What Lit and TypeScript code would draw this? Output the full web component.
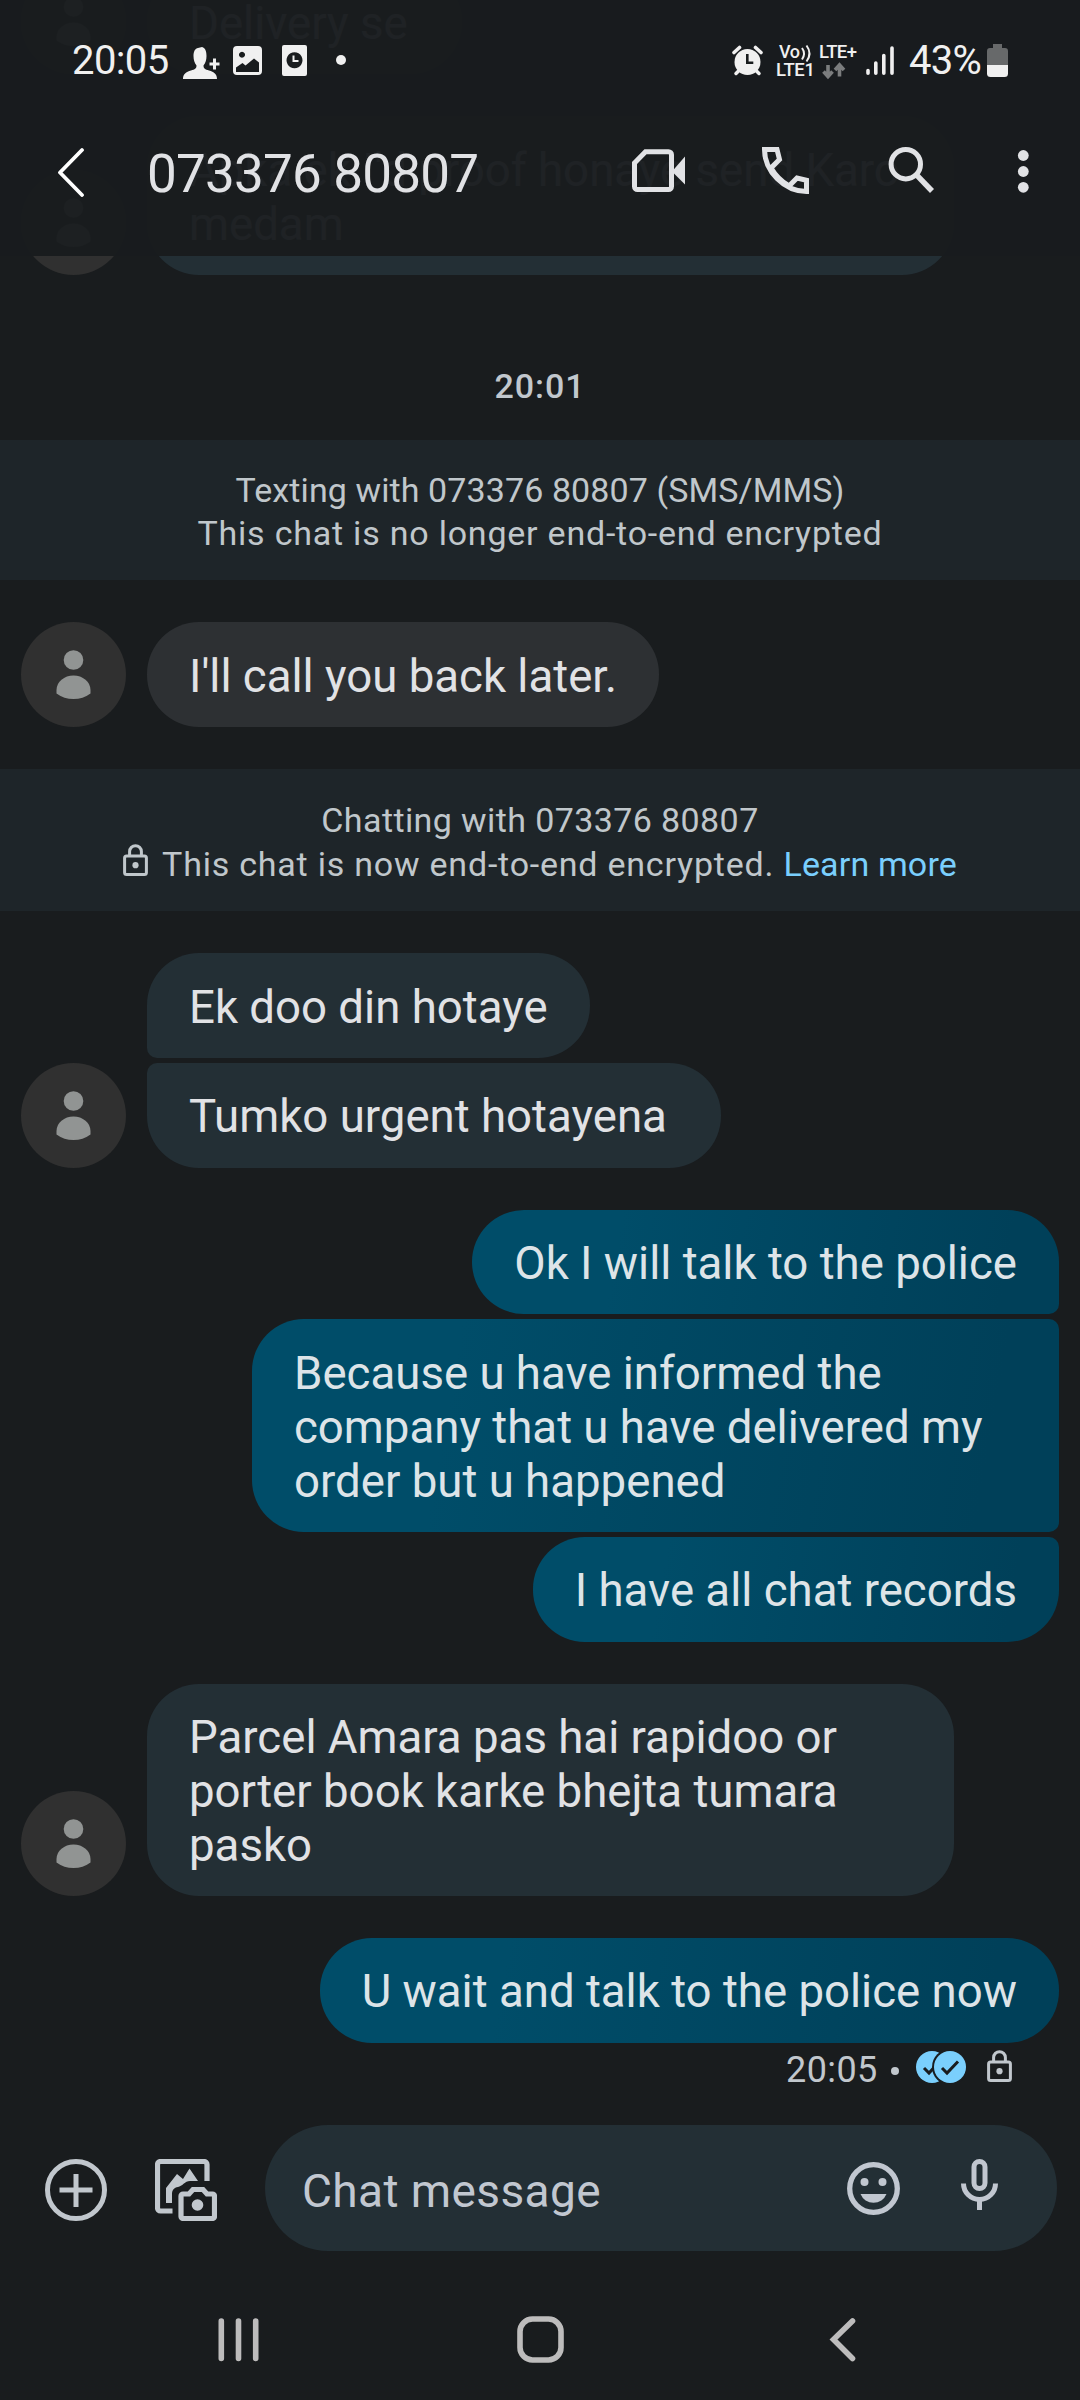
import { LitElement, html, css, nothing } from "lit";
import { customElement, property } from "lit/decorators.js";
import { classMap } from "lit/directives/class-map.js";

interface Bubble {
  lines: string[];
  flatTop?: boolean;
  flatBottom?: boolean;
  grey?: boolean;
  roomy?: boolean;
}

const lockIcon = html`<svg class="lock" viewBox="0 0 25 32">
  <rect x="1.6" y="12" width="21.8" height="18.4" rx="2" fill="none" stroke="currentColor" stroke-width="3"/>
  <path d="M6.6 12V7.6a5.9 5.9 0 0 1 11.8 0V12" fill="none" stroke="currentColor" stroke-width="3"/>
  <circle cx="12.5" cy="21.2" r="3.1" fill="currentColor"/>
</svg>`;

@customElement("chat-avatar")
export class ChatAvatar extends LitElement {
  static styles = css`
    :host { display: block; width: 105px; height: 105px; flex: none; }
    .pic { display: block; width: 105px; height: 105px; }
  `;
  render() {
    return html`<svg class="pic" viewBox="0 0 105 105">
      <circle cx="52.5" cy="52.5" r="52.5" fill="#303030"/>
      <circle cx="52.5" cy="38" r="9.8" fill="#919493"/>
      <path d="M35.5 71.5V68a17 14.5 0 0 1 34 0v3.500Q62 77 52.500 77T35.500 71.500Z" fill="#919493"/>
    </svg>`;
  }
}

@customElement("chat-group")
export class ChatGroup extends LitElement {
  @property({ attribute: false }) bubbles: Bubble[] = [];
  @property({ type: Boolean }) mine = false;
  static styles = css`
    :host { display: block; }
    .group { display: flex; align-items: flex-end; gap: 21px; padding: 0 21px; }
    .mine { justify-content: flex-end; }
    .stack { display: flex; flex-direction: column; gap: 5px; align-items: flex-start; }
    .mine .stack { align-items: flex-end; }
    .bubble {
      box-sizing: border-box; padding: 27.6px 42px 23.4px; border-radius: 52px; background: #232f35; color: #e1e2e5;
      font-size: 45.6px; line-height: 53.8px; white-space: nowrap;
    }
    .wide { width: 807px; }
    .roomy { padding-right: 54px; }
    .grey { background: #2d3033; }
    .flat-top { border-top-left-radius: 10px; }
    .flat-bottom { border-bottom-left-radius: 10px; }
    .mine .bubble { background: linear-gradient(100deg, #004d69 25%, #004059 90%); color: #dde4e8; }
    .mine .flat-top { border-top-left-radius: 52px; border-top-right-radius: 10px; }
    .mine .flat-bottom { border-bottom-left-radius: 52px; border-bottom-right-radius: 10px; }
    .line { display: block; }
  `;
  render() {
    return html`<div class=${classMap({ group: true, mine: this.mine })}>
      ${this.mine ? nothing : html`<chat-avatar></chat-avatar>`}
      <div class="stack">
        ${this.bubbles.map(
          (b) => html`<div class=${classMap({
            bubble: true, wide: b.lines.length > 1, roomy: !!b.roomy, grey: !!b.grey,
            "flat-top": !!b.flatTop, "flat-bottom": !!b.flatBottom,
          })}>${b.lines.map((l) => html`<span class="line">${l}</span>`)}</div>`
        )}
      </div>
    </div>`;
  }
}

@customElement("status-bar")
export class StatusBar extends LitElement {
  static styles = css`
    :host { display: block; }
    .bar { display: flex; align-items: center; height: 120px; padding: 0 72px 0 72px; color: #f0f0f0; }
    .time { font-size: 40px; line-height: 40px; width: 111px; letter-spacing: -0.6px; padding-top: 1px; }
    .icons { display: block; width: 165px; height: 40px; }
    .spacer { flex: 1; }
    .right { display: block; width: 164px; height: 40px; margin-right: 13px; }
    .tiny { font-family: Roboto, sans-serif; font-weight: 500; }
    .percent { font-size: 40px; line-height: 40px; letter-spacing: -0.7px; width: 78px; padding-top: 1px; }
    .battery { display: block; width: 21px; height: 40px; }
  `;
  render() {
    return html`<div class="bar">
      <span class="time">20:05</span>
      <svg class="icons" viewBox="183 40 165 40" fill="#f0f0f0">
        <path d="M183 79c0-5 3-7 8-8.500 4-1.200 5.500-2 5.500-5-2-2.500-3-5.500-3-9.500 0-5 1.800-7.500 4.500-8l4-1c3.500 1 4.500 4.500 4.500 9 0 4-1 7-3 9.500 0 3 1.500 3.800 5.500 5 5 1.500 8 3.500 8 8.500Z"/>
        <path d="M209.500 62.500h3.500V58.500h3v4h3.500v3h-3.500v4h-3v-4h-3.500Z"/>
        <path fill-rule="evenodd" d="M237 46h21a4 4 0 0 1 4 4v21a4 4 0 0 1-4 4H237a4 4 0 0 1-4-4V50a4 4 0 0 1 4-4ZM236 67.500V72h23V62.500L254 58.500 245.500 65.500 242.500 63ZM242 51.800a3 3 0 1 0 .01 0Z"/>
        <path fill-rule="evenodd" d="M284 45h21a2 2 0 0 1 2 2V74a2 2 0 0 1-2 2H284a2 2 0 0 1-2-2V47a2 2 0 0 1 2-2ZM294.500 52.300a8 8 0 1 0 .01 0Z"/>
        <path d="M293.500 55.500v5.500h5" fill="none" stroke="#f0f0f0" stroke-width="2"/>
        <circle cx="341" cy="60" r="5"/>
      </svg>
      <span class="spacer"></span>
      <svg class="right" viewBox="732 40 164 40" fill="#f0f0f0">
        <circle cx="747.500" cy="62" r="13"/>
        <path d="M734 52.500l5.500-5M761 52.500l-5.500-5" stroke="#f0f0f0" stroke-width="3.600" stroke-linecap="round"/>
        <path d="M738.500 71l-2.500 2.500M756.500 71l2.500 2.500" stroke="#f0f0f0" stroke-width="3.500" stroke-linecap="round"/>
        <path d="M747.300 54v8.800h6" fill="none" stroke="#191c1e" stroke-width="2.600"/>
        <text class="tiny" x="779" y="58" font-size="18" textLength="21">Vo</text>
        <path d="M802 48q4 5.500 0 11.500M806.500 45.500q6 8 0 16" fill="none" stroke="#f0f0f0" stroke-width="2"/>
        <text class="tiny" x="776" y="76" font-size="18.500" textLength="39">LTE1</text>
        <text class="tiny" x="819" y="58" font-size="18.500" textLength="38">LTE+</text>
        <path d="M828 65v11M823.500 71.500l4.500 5 4.500-5M839.500 76.500v-11M835 70l4.500-5 4.500 5" fill="none" stroke="#7b7d7e" stroke-width="3.600"/>
        <path d="M868 70.500v2.700M875.800 63v10.200M883.800 55.500v17.700M892 48v25.200" stroke="#f0f0f0" stroke-width="3.600" stroke-linecap="round"/>
      </svg>
      <span class="percent">43%</span>
      <svg class="battery" viewBox="987 40 21 40">
        <path d="M993 44h9v4h3a3 3 0 0 1 3 3v14h-21V51a3 3 0 0 1 3-3h3Z" fill="#67696a"/>
        <path d="M987 65h21v8.500a3.500 3.500 0 0 1-3.500 3.500h-14a3.500 3.500 0 0 1-3.500-3.500Z" fill="#f0f0f0"/>
      </svg>
    </div>`;
  }
}

@customElement("app-root")
export class AppRoot extends LitElement {
  static styles = css`
    :host {
      display: block; width: 1080px; height: 2400px; background: #191c1e;
      font-family: Roboto, "Liberation Sans", sans-serif; color: #e1e2e5;
    }
    .screen { position: relative; display: flex; flex-direction: column; height: 2400px; overflow: hidden; }
    .top { position: absolute; top: 0; left: 0; width: 1080px; height: 256px; background: rgba(25, 28, 30, 0.97); }
    .toolbar { display: flex; align-items: center; height: 104px; padding: 0 49px 0 57px; }
    .back { display: block; width: 28px; height: 50px; }
    .title { font-size: 53px; line-height: 60px; margin-left: 62px; width: 484px; letter-spacing: -0.8px; white-space: nowrap; padding-top: 3px; }
    .actions { display: block; width: 400px; height: 60px; }
    .thread { height: 2107px; overflow: hidden; display: flex; flex-direction: column; gap: 42px; }
    .earlier { height: 275px; display: flex; flex-direction: column; justify-content: flex-end; gap: 42px; }
    .time { text-align: center; font-size: 34px; line-height: 39px; font-weight: 500; color: #c1c7cd; margin: 50px 0 -8px; height: 39px; letter-spacing: 0.9px; }
    .banner { background: #1e2529; color: #c0c7cb; text-align: center; font-size: 34px; line-height: 43px; padding: 29px 0 25px; height: 86px; white-space: nowrap; }
    .banner.secure { line-height: 44px; padding: 29px 0 25px; height: 88px; }
    .row { display: block; letter-spacing: 0.1px; }
    .secure .row { letter-spacing: 0.4px; }
    .row.note { letter-spacing: 0.78px; }
    .learn { color: #7acffd; letter-spacing: 0.15px; }
    .lock { display: inline-block; width: 25px; height: 32px; }
    .banner .lock { margin-right: 14px; }
    .meta { display: flex; align-items: center; justify-content: flex-end; padding-right: 68px; margin-top: -35px; height: 40px; color: #c1c7cd; font-size: 36px; letter-spacing: 0.4px; }
    .sent { width: 105px; white-space: nowrap; }
    .bullet { width: 8px; height: 8px; border-radius: 4px; background: #c1c7cd; margin-right: 17px; margin-top: 2px; }
    .ticks { display: block; width: 50px; height: 32px; margin: -6px 21px 0 0; }
    .meta .lock { margin-top: -7px; }
    .composer { display: flex; align-items: center; height: 126px; padding: 0 23px 0 45px; margin-top: 18px; color: #c1c7cd; }
    .tool { display: block; width: 62px; height: 62px; margin: 3px 48px 0 0; }
    .field { display: flex; align-items: center; width: 792px; height: 126px; border-radius: 63px; background: #232f35; box-sizing: border-box; padding: 0 59px 0 37px; }
    .hint { flex: 1; font-size: 46px; color: #c1c7d0; padding-top: 5px; letter-spacing: 0.4px; }
    .emoji { display: block; width: 53px; height: 53px; margin-right: 61px; }
    .mic { display: block; width: 37px; height: 52px; margin-top: -6px; }
    .nav { display: block; width: 1080px; height: 149px; }
  `;

  render() {
    return html`<div class="screen">
      <div class="thread">
        <div class="earlier">
          <chat-group .bubbles=${[{ lines: ["Delivery se"], roomy: true }]}></chat-group>
          <chat-group .bubbles=${[{ lines: ["Apka ek I'd proof honaye send Karo", "medam"] }]}></chat-group>
        </div>
        <div class="time">20:01</div>
        <div class="banner">
          <span class="row">Texting with 073376 80807 (SMS/MMS)</span>
          <span class="row note">This chat is no longer end-to-end encrypted</span>
        </div>
        <chat-group .bubbles=${[{ lines: ["I'll call you back later."], grey: true }]}></chat-group>
        <div class="banner secure">
          <span class="row">Chatting with 073376 80807</span>
          <span class="row note">${lockIcon}This chat is now end-to-end encrypted. <span class="learn">Learn more</span></span>
        </div>
        <chat-group .bubbles=${[
          { lines: ["Ek doo din hotaye"], flatBottom: true },
          { lines: ["Tumko urgent hotayena"], flatTop: true, roomy: true },
        ]}></chat-group>
        <chat-group mine .bubbles=${[
          { lines: ["Ok I will talk to the police"], flatBottom: true },
          { lines: ["Because u have informed the", "company that u have delivered my", "order but u happened"], flatTop: true, flatBottom: true },
          { lines: ["I have all chat records"], flatTop: true },
        ]}></chat-group>
        <chat-group .bubbles=${[
          { lines: ["Parcel Amara pas hai rapidoo or", "porter book karke bhejta tumara", "pasko"] },
        ]}></chat-group>
        <chat-group mine .bubbles=${[{ lines: ["U wait and talk to the police now"] }]}></chat-group>
        <div class="meta">
          <span class="sent">20:05</span>
          <span class="bullet"></span>
          <svg class="ticks" viewBox="0 0 50 32">
            <circle cx="16" cy="16" r="16" fill="#7acffd"/>
            <path d="M8 17l5 5 11-12" fill="none" stroke="#191c1e" stroke-width="3"/>
            <circle cx="34" cy="16" r="18" fill="#191c1e"/>
            <circle cx="34" cy="16" r="16" fill="#7acffd"/>
            <path d="M26 17l5 5 11-11.500" fill="none" stroke="#191c1e" stroke-width="3"/>
          </svg>
          ${lockIcon}
        </div>
      </div>

      <div class="composer">
        <svg class="tool" viewBox="0 0 62 62" fill="none" stroke="currentColor" stroke-width="5">
          <circle cx="31" cy="31" r="28.500"/>
          <path d="M31 15v33M14.500 31h33"/>
        </svg>
        <svg class="tool" viewBox="0 0 62 62" fill="none" stroke="currentColor" stroke-width="5.200">
          <path d="M17.500 52H5.500a3 3 0 0 1-3-3V5.500a3 3 0 0 1 3-3H49a3 3 0 0 1 3 3V22"/>
          <path d="M11 44V29L22 15l6 5 6.500-10.500L43 22H35c-5 0-8 5.500-12 6-4 .5-6 3.500-6 6.500V44Z" fill="currentColor" stroke="none"/>
          <path d="M28 35h6l4-4.500h10l4 4.500h5.500a2 2 0 0 1 2 2V57.500a2 2 0 0 1-2 2H28a2 2 0 0 1-2-2V37a2 2 0 0 1 2-2Z"/>
          <circle cx="42.500" cy="46" r="5.800" fill="currentColor" stroke="none"/>
        </svg>
        <div class="field">
          <span class="hint">Chat message</span>
          <svg class="emoji" viewBox="0 0 53 53" fill="#c1c7d0">
            <circle cx="26.500" cy="26.500" r="23.800" fill="none" stroke="#c1c7d0" stroke-width="5.300"/>
            <circle cx="17.500" cy="20" r="4"/><circle cx="35.500" cy="20" r="4"/>
            <path d="M13.500 32h26a14 14 0 0 1-26 0Z"/>
          </svg>
          <svg class="mic" viewBox="0 0 37 52" fill="none" stroke="#c1c7d0" stroke-width="5">
            <rect x="13" y="2.500" width="11" height="27" rx="5.500"/>
            <path d="M2.500 24.500a16 16 0 0 0 32 0M18.500 41v10"/>
          </svg>
        </div>
      </div>

      <svg class="nav" viewBox="0 2251 1080 149" fill="none" stroke="#bdbcbc" stroke-width="5.600">
        <path d="M221.300 2321v37.500M238.500 2321v37.500M255.700 2321v37.500" stroke-linecap="round"/>
        <rect x="520" y="2319" width="41" height="41" rx="12.500"/>
        <path d="M852.500 2321L833.500 2339.500L852.500 2358.500" stroke-linecap="round"/>
      </svg>

      <div class="top">
        <status-bar></status-bar>
        <div class="toolbar">
          <svg class="back" viewBox="57 147 28 50"><path d="M82 150L60 172.500L82 195" fill="none" stroke="#fff" stroke-width="3.800" stroke-linecap="round" stroke-linejoin="round"/></svg>
          <span class="title">073376 80807</span>
          <svg class="actions" viewBox="630 142 400 60" fill="none" stroke="#e1e2e5" stroke-width="5">
            <path d="M644.500 151.700H667.500a3 3 0 0 1 3 3V186.500a3 3 0 0 1-3 3H636.500a3 3 0 0 1-3-3V163Z"/>
            <path d="M671 171.500L684 156.500V184.500Z" fill="#e1e2e5" stroke="none"/>
            <path d="M763.500 149.500h12.500l2.500 10-8.500 8.500a52 52 0 0 0 18 18l8-8 9.500 2.200v11.300c-22 0-42-20-42-42ZM769.500 168l1.500-1M787 186l1.500-1"/>
            <circle cx="904.800" cy="164.200" r="14.700"/>
            <path d="M915.500 174.800L931 191" stroke-width="5.500"/>
            <g fill="#e1e2e5" stroke="none"><circle cx="1022.300" cy="155.500" r="5.400"/><circle cx="1022.300" cy="171.500" r="5.400"/><circle cx="1022.300" cy="187.300" r="5.400"/></g>
          </svg>
        </div>
      </div>
    </div>`;
  }
}
